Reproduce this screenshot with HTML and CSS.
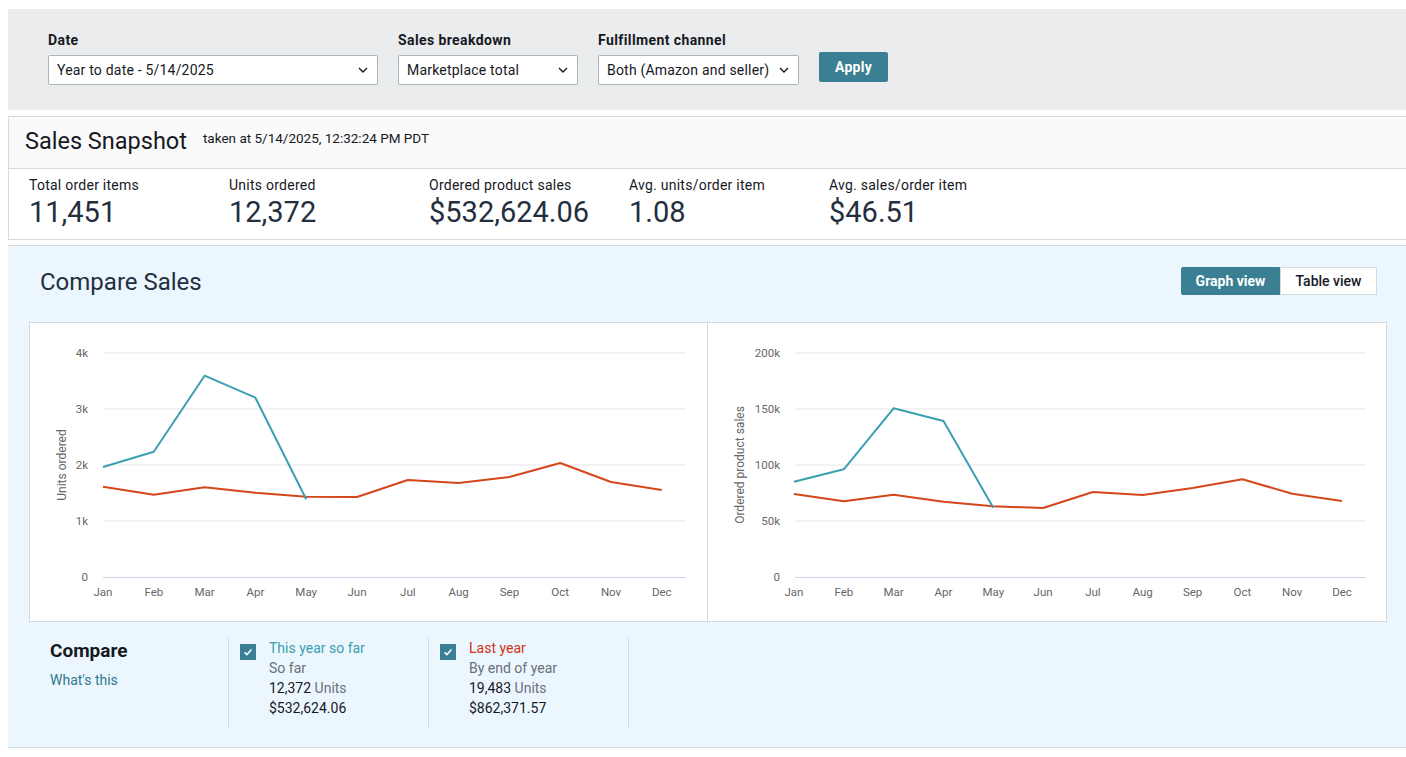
FILE: index.html
```html
<!DOCTYPE html>
<html>
<head>
<meta charset="utf-8">
<link rel="stylesheet" href="styles.css">
</head>
<body>
<div class="page">
  <div class="filters">
    <div class="field">
      <div class="field-label">Date</div>
      <div class="select w-date"><span>Year to date - 5/14/2025</span>
        <svg class="chev" width="10" height="6" viewBox="0 0 10 6"><path d="M1 1l4 4 4-4" fill="none" stroke="#16191f" stroke-width="1.4"/></svg></div>
    </div>
    <div class="field">
      <div class="field-label">Sales breakdown</div>
      <div class="select w-break"><span>Marketplace total</span>
        <svg class="chev" width="10" height="6" viewBox="0 0 10 6"><path d="M1 1l4 4 4-4" fill="none" stroke="#16191f" stroke-width="1.4"/></svg></div>
    </div>
    <div class="field">
      <div class="field-label">Fulfillment channel</div>
      <div class="select w-ful"><span>Both (Amazon and seller)</span>
        <svg class="chev" width="10" height="6" viewBox="0 0 10 6"><path d="M1 1l4 4 4-4" fill="none" stroke="#16191f" stroke-width="1.4"/></svg></div>
    </div>
    <button class="apply">Apply</button>
  </div>

  <div class="snapshot">
    <div class="snap-head">
      <div class="snap-title">Sales Snapshot</div>
      <div class="snap-taken">taken at 5/14/2025, 12:32:24 PM PDT</div>
    </div>
    <div class="metrics">
      <div class="metric"><div class="m-label">Total order items</div><div class="m-value">11,451</div></div>
      <div class="metric"><div class="m-label">Units ordered</div><div class="m-value">12,372</div></div>
      <div class="metric"><div class="m-label">Ordered product sales</div><div class="m-value">$532,624.06</div></div>
      <div class="metric"><div class="m-label">Avg. units/order item</div><div class="m-value">1.08</div></div>
      <div class="metric"><div class="m-label">Avg. sales/order item</div><div class="m-value">$46.51</div></div>
    </div>
  </div>

  <div class="compare">
    <div class="compare-head">
      <div class="compare-title">Compare Sales</div>
      <div class="toggle">
        <button class="tg active">Graph view</button>
        <button class="tg">Table view</button>
      </div>
    </div>

    <div class="charts">
      <div class="panel left">
        <svg width="677" height="298" viewBox="30 324 677 298">
          <g stroke="#e6e6e6" stroke-width="1">
            <line x1="103" y1="354" x2="686" y2="354"/>
            <line x1="103" y1="410" x2="686" y2="410"/>
            <line x1="103" y1="466" x2="686" y2="466"/>
            <line x1="103" y1="522" x2="686" y2="522"/>
          </g>
          <line x1="103" y1="578.5" x2="686" y2="578.5" stroke="#ccd6eb" stroke-width="1"/>
          <g class="ylab" text-anchor="end">
            <text x="88" y="358">4k</text>
            <text x="88" y="414">3k</text>
            <text x="88" y="470">2k</text>
            <text x="88" y="526">1k</text>
            <text x="88" y="582">0</text>
          </g>
          <text class="atitle" transform="translate(62 466) rotate(-90)" text-anchor="middle" dominant-baseline="central">Units ordered</text>
          <g class="xlab" text-anchor="middle">
            <text x="103" y="597">Jan</text>
            <text x="153.8" y="597">Feb</text>
            <text x="204.6" y="597">Mar</text>
            <text x="255.4" y="597">Apr</text>
            <text x="306.2" y="597">May</text>
            <text x="357" y="597">Jun</text>
            <text x="407.8" y="597">Jul</text>
            <text x="458.6" y="597">Aug</text>
            <text x="509.4" y="597">Sep</text>
            <text x="560.2" y="597">Oct</text>
            <text x="611" y="597">Nov</text>
            <text x="661.8" y="597">Dec</text>
          </g>
          <polyline fill="none" stroke="#d6461b" stroke-width="2" stroke-linejoin="round" points="103,487.7 153.8,495.7 204.6,488.3 255.4,493.7 306.2,497.7 357,498 407.8,481 458.6,484 509.4,478 560.2,464 611,483 661.8,491"/>
          <polyline fill="none" stroke="#3a9fb1" stroke-width="2" stroke-linejoin="round" points="103,468 153.8,452.7 204.6,376.7 255.4,398.7 306.2,500.3"/>
        </svg>
      </div>
      <div class="panel right">
        <svg width="678" height="298" viewBox="708 324 678 298">
          <g stroke="#e6e6e6" stroke-width="1">
            <line x1="795" y1="354" x2="1366" y2="354"/>
            <line x1="795" y1="410" x2="1366" y2="410"/>
            <line x1="795" y1="466" x2="1366" y2="466"/>
            <line x1="795" y1="522" x2="1366" y2="522"/>
          </g>
          <line x1="795" y1="578.5" x2="1366" y2="578.5" stroke="#ccd6eb" stroke-width="1"/>
          <g class="ylab" text-anchor="end">
            <text x="780" y="358">200k</text>
            <text x="780" y="414">150k</text>
            <text x="780" y="470">100k</text>
            <text x="780" y="526">50k</text>
            <text x="780" y="582">0</text>
          </g>
          <text class="atitle" transform="translate(740 466) rotate(-90)" text-anchor="middle" dominant-baseline="central">Ordered product sales</text>
          <g class="xlab" text-anchor="middle">
            <text x="794" y="597">Jan</text>
            <text x="843.8" y="597">Feb</text>
            <text x="893.6" y="597">Mar</text>
            <text x="943.5" y="597">Apr</text>
            <text x="993.3" y="597">May</text>
            <text x="1043.1" y="597">Jun</text>
            <text x="1092.9" y="597">Jul</text>
            <text x="1142.7" y="597">Aug</text>
            <text x="1192.6" y="597">Sep</text>
            <text x="1242.4" y="597">Oct</text>
            <text x="1292.2" y="597">Nov</text>
            <text x="1342" y="597">Dec</text>
          </g>
          <polyline fill="none" stroke="#d6461b" stroke-width="2" stroke-linejoin="round" points="794,495 843.8,502.3 893.6,495.7 943.5,502.7 993.3,507.3 1043.1,509 1092.9,493 1142.7,496 1192.6,489 1242.4,480.3 1292.2,494.7 1342,502"/>
          <polyline fill="none" stroke="#3a9fb1" stroke-width="2" stroke-linejoin="round" points="794,482.7 843.8,470.3 893.6,409.3 943.5,422 993.3,508.7"/>
        </svg>
      </div>
    </div>

    <div class="legend">
      <div class="legend-intro">
        <div class="lg-title">Compare</div>
        <div class="lg-link">What's this</div>
      </div>
      <div class="lg-col">
        <span class="cb"><svg width="16" height="16" viewBox="0 0 16 16"><path d="M4.5 8.2l2.4 2.4 4.6-5" fill="none" stroke="#fff" stroke-width="1.5"/></svg></span>
        <div class="lg-text">
          <div class="lg-name teal">This year so far</div>
          <div class="lg-sub">So far</div>
          <div class="lg-num">12,372 <span class="unit">Units</span></div>
          <div class="lg-num">$532,624.06</div>
        </div>
      </div>
      <div class="lg-col">
        <span class="cb"><svg width="16" height="16" viewBox="0 0 16 16"><path d="M4.5 8.2l2.4 2.4 4.6-5" fill="none" stroke="#fff" stroke-width="1.5"/></svg></span>
        <div class="lg-text">
          <div class="lg-name red">Last year</div>
          <div class="lg-sub">By end of year</div>
          <div class="lg-num">19,483 <span class="unit">Units</span></div>
          <div class="lg-num">$862,371.57</div>
        </div>
      </div>
    </div>
  </div>
</div>
</body>
</html>
```

FILE: styles.css
```css
html, body {
  margin: 0;
  padding: 0;
  background: #ffffff;
  overflow: hidden;
}
body {
  padding: 9px 0 0 8px;
  font-family: Roboto, "Liberation Sans", Arial, sans-serif;
  color: #16191f;
}
.page {
  width: 1398px;
}

/* Filters */
.filters {
  background: #eaeced;
  height: 101px;
  box-sizing: border-box;
  padding: 23px 40px 0 40px;
  display: flex;
  gap: 20px;
  align-items: flex-start;
}
.field-label {
  font-size: 14px;
  font-weight: 700;
  letter-spacing: 0.4px;
  line-height: 16px;
  margin-bottom: 7px;
  color: #16191f;
}
.select {
  height: 30px;
  box-sizing: border-box;
  background: #fff;
  border: 1px solid #aab7b8;
  border-radius: 2px;
  display: flex;
  align-items: center;
  justify-content: space-between;
  padding: 0 9px 0 8px;
  font-size: 14px;
  letter-spacing: 0.2px;
  color: #16191f;
}
.w-date { width: 330px; }
.w-break { width: 180px; }
.w-ful { width: 201px; }
.chev { display: block; flex: none; }
.apply {
  margin-top: 20px;
  height: 30px;
  width: 69px;
  border: none;
  border-radius: 2px;
  background: #3a7f93;
  color: #fff;
  font-family: inherit;
  font-size: 14px;
  font-weight: 700;
  letter-spacing: 0.3px;
  padding: 0;
}

/* Snapshot */
.snapshot {
  margin-top: 6px;
  border: 1px solid #d5dbdb;
  border-right: none;
}
.snap-head {
  height: 52px;
  box-sizing: border-box;
  background: #fafafa;
  border-bottom: 1px solid #d5dbdb;
  display: flex;
  align-items: flex-start;
  padding: 10px 16px 0 16px;
  gap: 16px;
}
.snap-title {
  font-size: 23.5px;
  line-height: 28px;
  color: #16191f;
}
.snap-taken {
  font-size: 13.5px;
  line-height: 16px;
  margin-top: 3px;
  color: #16191f;
}
.metrics {
  display: flex;
  height: 70px;
  box-sizing: border-box;
  padding: 8px 0 0 20px;
}
.metric {
  width: 200px;
}
.m-label {
  font-size: 14px;
  letter-spacing: 0.25px;
  line-height: 16px;
  color: #16191f;
}
.m-value {
  font-size: 29px;
  line-height: 32px;
  color: #232f3e;
  margin-top: 3px;
}

/* Compare */
.compare {
  margin-top: 5px;
  background: #ecf6fe;
  border-top: 1px solid #d5dbdb;
  border-bottom: 1px solid #d5dbdb;
  padding: 21px 19px 20px 21px;
}
.compare-head {
  display: flex;
  align-items: center;
  justify-content: space-between;
  height: 28px;
  padding: 0 10px 0 11px;
}
.compare-title {
  font-size: 24px;
  line-height: 30px;
  margin-top: 1px;
  color: #232f3e;
}
.toggle {
  display: flex;
  height: 28px;
}
.tg {
  font-family: inherit;
  font-size: 14px;
  font-weight: 500;
  height: 28px;
  padding: 0;
  border: 1px solid #d5dbdb;
  background: #fff;
  color: #16191f;
  width: 97px;
}
.tg.active {
  background: #3a7f93;
  border-color: #3a7f93;
  color: #fff;
  font-weight: 700;
  width: 99px;
  border-radius: 2px 0 0 2px;
}
.charts {
  margin-top: 27px;
  display: flex;
  background: #fff;
  border: 1px solid #d5dbdb;
  width: 1358px;
  box-sizing: border-box;
}
.panel svg { display: block; }
.panel.left { border-right: 1px solid #d5dbdb; }
.ylab text, .xlab text {
  font-family: Roboto, "Liberation Sans", Arial, sans-serif;
  font-size: 11.5px;
  fill: #666666;
}
.atitle {
  font-family: Roboto, "Liberation Sans", Arial, sans-serif;
  font-size: 12px;
  fill: #666666;
}

/* Legend */
.legend {
  margin-top: 16px;
  display: flex;
  padding-left: 21px;
}
.legend-intro {
  width: 178px;
  border-right: 1px solid #d5dbdb;
  box-sizing: content-box;
}
.lg-title {
  font-size: 19px;
  font-weight: 700;
  line-height: 24px;
  margin-top: 1px;
  color: #16191f;
}
.lg-link {
  font-size: 14px;
  line-height: 20px;
  margin-top: 7px;
  color: #2e7b8e;
}
.lg-col {
  height: 89px;
  border-right: 1px solid #d5dbdb;
  display: flex;
  align-items: flex-start;
  padding-left: 11px;
  box-sizing: border-box;
  width: 200px;
  gap: 13px;
}
.cb {
  width: 16px;
  height: 16px;
  background: #3a7f93;
  margin-top: 6px;
  display: block;
}
.cb svg { display: block; }
.lg-text {
  font-size: 14px;
  line-height: 20px;
}
.lg-name.teal { color: #3a9fb1; }
.lg-name.red { color: #d13212; }
.lg-sub { color: #687078; }
.lg-num { color: #16191f; }
.unit { color: #687078; }
```
